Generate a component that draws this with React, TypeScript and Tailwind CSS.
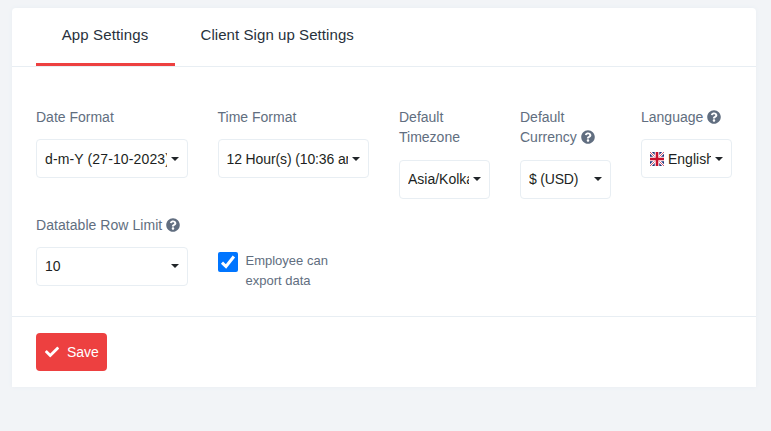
import type { ReactNode } from "react";
import { FaCheck, FaQuestionCircle } from "react-icons/fa";

function Label({
  children,
  help = false,
  spacing = "mb-3",
}: {
  children: ReactNode;
  help?: boolean;
  spacing?: string;
}) {
  return (
    <label className={`block text-sm leading-[20.5px] text-[#616e80] ${spacing}`}>
      {children}
      {help && <FaQuestionCircle className="ml-1 inline-block size-3.5 align-[-2px]" />}
    </label>
  );
}

function Select({ children, tracking = "" }: { children: ReactNode; tracking?: string }) {
  return (
    <button
      type="button"
      className="flex h-[39px] w-full items-center rounded border border-[#e8eef3] bg-white pr-2 pl-2 text-left text-sm text-[#28313c]"
    >
      <span
        className={`flex h-6 min-w-0 flex-1 items-center overflow-hidden whitespace-nowrap text-[#1d1f22] ${tracking}`}
      >
        {children}
      </span>
      <span className="ml-1 h-0 w-0 shrink-0 border-x-4 border-t-4 border-x-transparent border-t-[#212529]" />
    </button>
  );
}

function UkFlag() {
  return (
    <svg viewBox="0 0 14 14" className="mr-1 size-3.5 shrink-0">
      <path fill="#1f3278" d="M0 0h14v14H0z" />
      <path stroke="#fff" strokeWidth="2.6" d="M0 0l14 14M14 0L0 14" />
      <path stroke="#d0304a" strokeWidth="0.8" d="M0 0l14 14M14 0L0 14" />
      <path stroke="#fff" strokeWidth="4.6" d="M7 0v14M0 7h14" />
      <path stroke="#c8102e" strokeWidth="2.6" d="M7 0v14M0 7h14" />
    </svg>
  );
}

export default function App() {
  return (
    <div className="h-[431px] w-[771px] overflow-hidden bg-[#f2f4f7] pt-2 pl-3 font-['Liberation_Sans',Arial,sans-serif]">
      <main className="h-[379px] w-[744px] rounded-t bg-white shadow-[0_0_4px_0_#e8eef3]">
        <nav className="flex h-[59px] border-b border-[#e8eef3] px-6 text-[15px] leading-[22px] text-[#28313c]">
          <a className="w-[139px] border-b-3 border-[#ed4040] pt-4 pr-px text-center tracking-[0.12px]">App Settings</a>
          <a className="pt-4 pl-[25.5px] tracking-[0.07px] whitespace-nowrap">Client Sign up Settings</a>
        </nav>

        <section className="h-[249px] px-6 pt-[39.5px]">
          <div className="-mx-[15px] grid grid-cols-12">
            <div className="col-span-3 h-[108px] px-[15px]">
              <Label>Date Format</Label>
              <Select tracking="tracking-[0.13px]">d-m-Y (27-10-2023)</Select>
            </div>
            <div className="col-span-3 px-[15px]">
              <Label>Time Format</Label>
              <Select tracking="tracking-[-0.12px]">12 Hour(s) (10:36 am)</Select>
            </div>
            <div className="col-span-2 px-[15px]">
              <Label>Default Timezone</Label>
              <Select>Asia/Kolkata</Select>
            </div>
            <div className="col-span-2 px-[15px]">
              <Label help>Default Currency</Label>
              <Select tracking="tracking-[-0.2px]">$ (USD)</Select>
            </div>
            <div className="col-span-2 px-[15px]">
              <Label help>Language</Label>
              <Select>
                <UkFlag />
                English
              </Select>
            </div>
            <div className="col-span-3 px-[15px]">
              <Label help spacing="mb-[11.5px]">
                <span className="tracking-[0.05px]">Datatable Row Limit</span>
              </Label>
              <Select>10</Select>
            </div>
            <div className="col-span-3 flex items-start px-[15px] pt-[36.5px]">
              <span className="mt-px flex size-5 shrink-0 items-center justify-center rounded-[2px] bg-[#0075ff]">
                <svg viewBox="0 0 20 20" className="size-5" fill="none">
                  <path stroke="#fff" strokeWidth="3" d="M4 10.6l4 3.9 7.9-10" />
                </svg>
              </span>
              <span className="ml-2 w-[100px] text-[13px] leading-5 text-[#616e80]">Employee can export data</span>
            </div>
          </div>
        </section>

        <footer className="border-t border-[#e8eef3] px-6 pt-4">
          <button
            type="button"
            className="flex h-[38px] w-[71px] items-center rounded bg-[#ed4040] pl-[9px] text-sm text-white"
          >
            <FaCheck className="mr-2 size-3.5" />
            Save
          </button>
        </footer>
      </main>
    </div>
  );
}
